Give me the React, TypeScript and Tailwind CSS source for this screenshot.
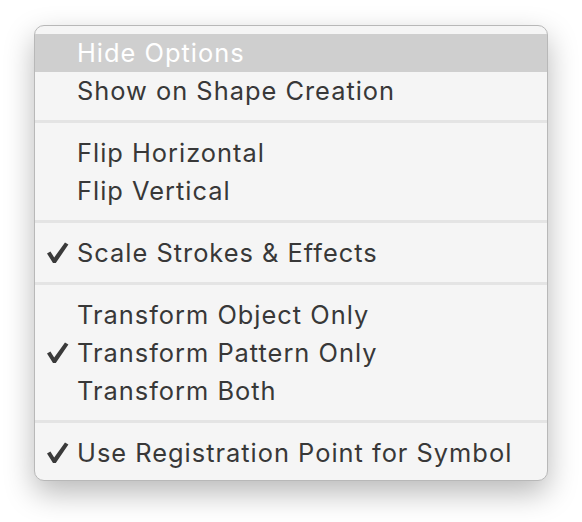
import React from "react";

type Item = { label: string; checked?: boolean; active?: boolean } | "sep";

const items: Item[] = [
  { label: "Hide Options", active: true },
  { label: "Show on Shape Creation" },
  "sep",
  { label: "Flip Horizontal" },
  { label: "Flip Vertical" },
  "sep",
  { label: "Scale Strokes & Effects", checked: true },
  "sep",
  { label: "Transform Object Only" },
  { label: "Transform Pattern Only", checked: true },
  { label: "Transform Both" },
  "sep",
  { label: "Use Registration Point for Symbol", checked: true },
];

function Check() {
  return (
    <svg width="23" height="22" viewBox="0 0 23 22" className="absolute left-[11px] top-[8px]">
      <path
        d="M1 11.5 L4.4 9.4 L8.2 15.4 L19 0.6 L22.4 2.6 L9.8 21 L7 21 Z"
        fill="#3a3a3a"
      />
    </svg>
  );
}

export default function App() {
  return (
    <div className="min-h-[522px] bg-white pt-[25px] pl-[34px]">
      <div className="w-[514px] rounded-[10px] border border-[#b8b8b8] bg-[#f5f5f5] py-[8px] shadow-[0_12px_30px_rgba(0,0,0,0.28)] font-['Inter','Liberation_Sans',sans-serif]">
        {items.map((it, i) =>
          it === "sep" ? (
            <div key={i} className="pt-[10px] pb-[11px]">
              <div className="h-[3px] bg-[#e4e4e4]" />
            </div>
          ) : (
            <div
              key={i}
              className={`relative flex h-[38px] items-center pl-[42px] text-[25.4px] tracking-[1px] ${
                it.active ? "bg-[#cfcfcf] text-white" : "text-[#383838]"
              }`}
            >
              {it.checked && <Check />}
              {it.label}
            </div>
          )
        )}
      </div>
    </div>
  );
}
